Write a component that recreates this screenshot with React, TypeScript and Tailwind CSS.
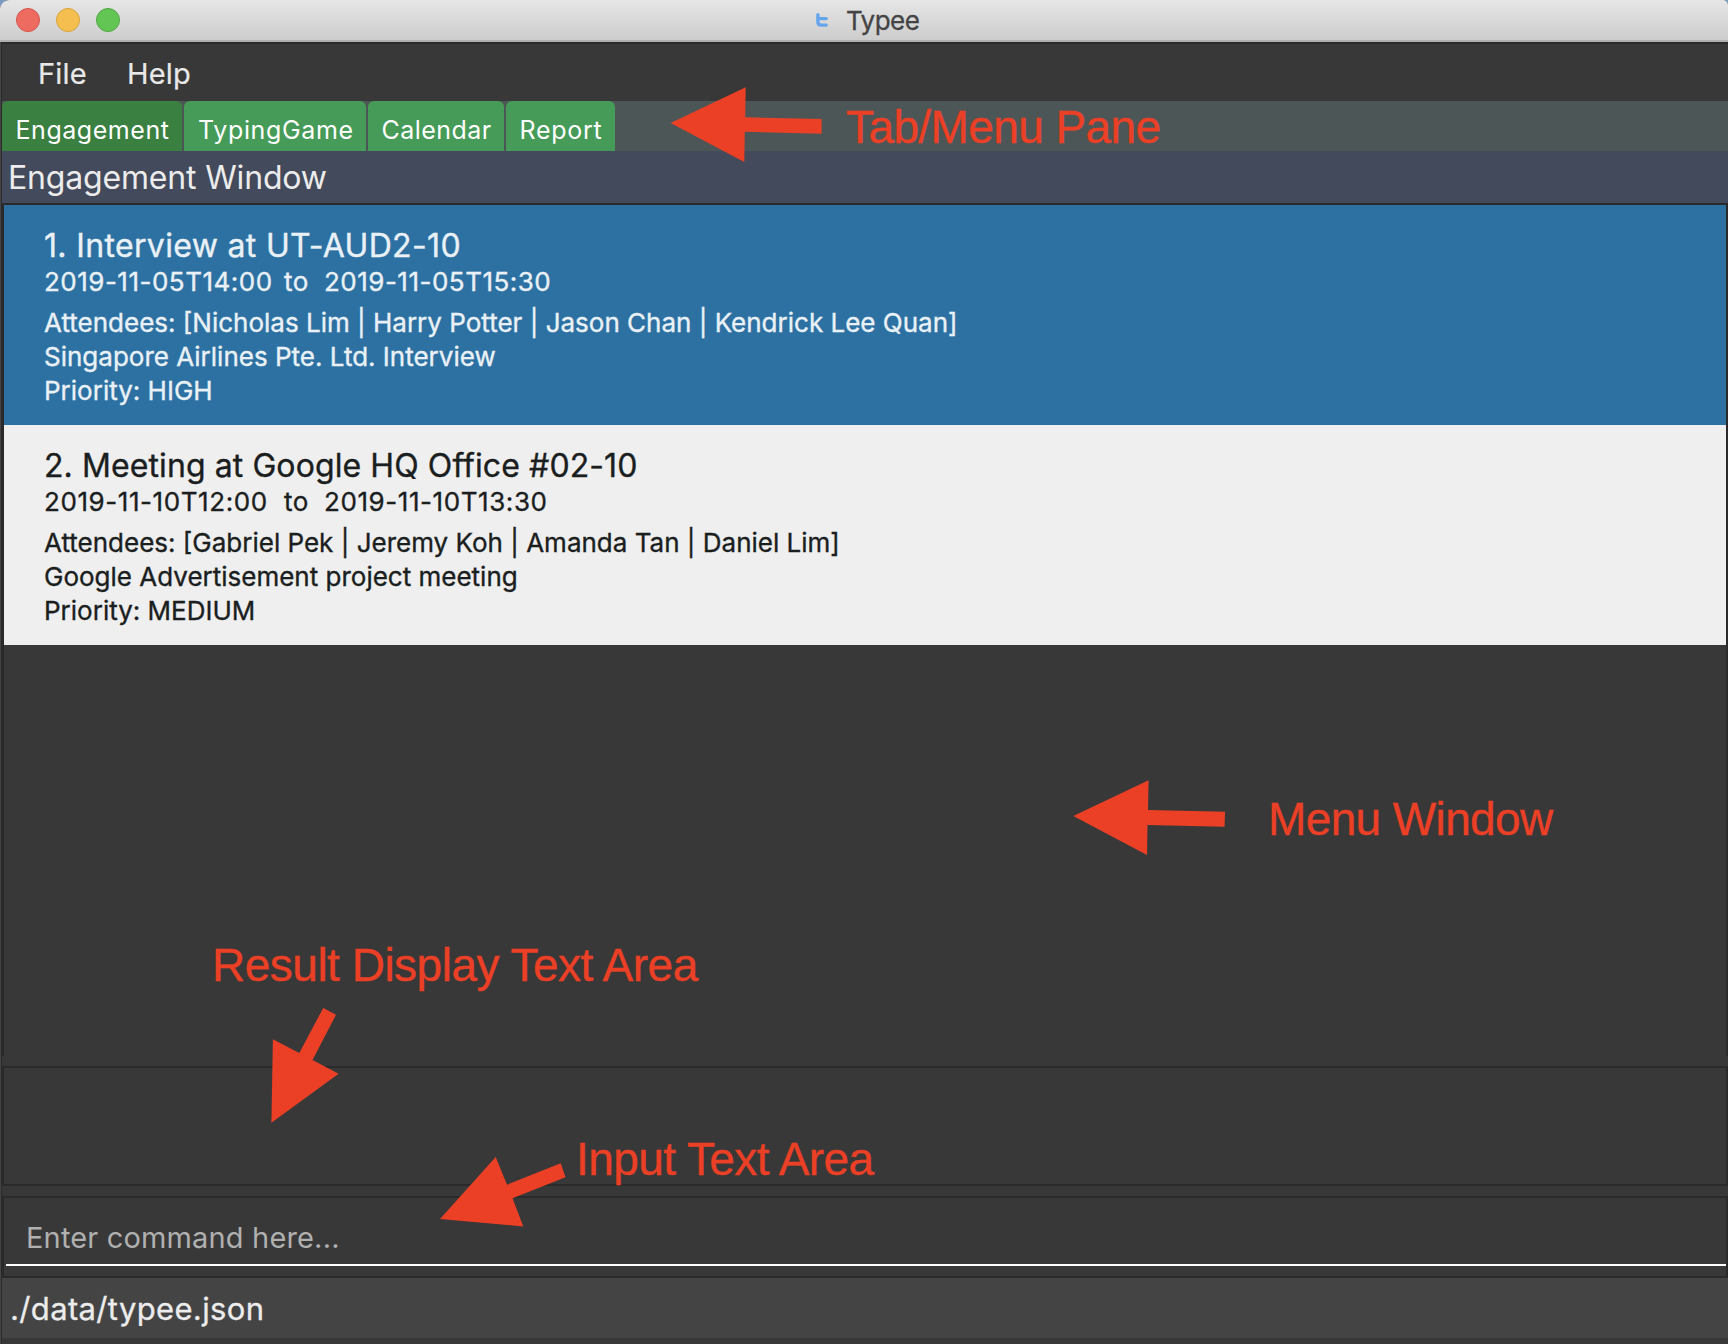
type Engagement = {
  title: string;
  titleSpacing: string;
  from: string;
  to: string;
  dateSpacing: string;
  attendees: string;
  description: string;
  priority: string;
  selected: boolean;
};

const engagements: Engagement[] = [
  {
    title: '1. Interview at UT-AUD2-10',
    titleSpacing: 'tracking-[0.34px]',
    from: '2019-11-05T14:00',
    to: '2019-11-05T15:30',
    dateSpacing: 'tracking-[0.49px]',
    attendees: 'Attendees: [Nicholas Lim | Harry Potter | Jason Chan | Kendrick Lee Quan]',
    description: 'Singapore Airlines Pte. Ltd. Interview',
    priority: 'Priority: HIGH',
    selected: true,
  },
  {
    title: '2. Meeting at Google HQ Office #02-10',
    titleSpacing: 'tracking-[0.09px]',
    from: '2019-11-10T12:00',
    to: '2019-11-10T13:30',
    dateSpacing: 'tracking-[0.57px]',
    attendees: 'Attendees: [Gabriel Pek | Jeremy Koh | Amanda Tan | Daniel Lim]',
    description: 'Google Advertisement project meeting',
    priority: 'Priority: MEDIUM',
    selected: false,
  },
];

const tabs = [
  { label: 'Engagement', style: 'w-[180px] bg-[#3a8040] tracking-[0.55px] pl-[13.5px]' },
  { label: 'TypingGame', style: 'w-[182px] bg-[#459b57] tracking-[0.65px] pl-[14px]' },
  { label: 'Calendar', style: 'w-[136px] bg-[#459b57] tracking-[0.44px] pl-[13.5px]' },
  { label: 'Report', style: 'w-[109px] bg-[#459b57] tracking-[0.7px] pl-[13.5px]' },
];

function TitleBar() {
  return (
    <header className="relative flex h-[42px] shrink-0 items-center border-b-2 border-[#b0b0b0] bg-gradient-to-b from-[#e6e6e6] to-[#cdcdcd] pl-4">
      <div className="flex gap-4">
        <span className="size-6 rounded-full border border-[#d4544c] bg-[#ed6b60]" />
        <span className="size-6 rounded-full border border-[#d9a13c] bg-[#f5bf4f]" />
        <span className="size-6 rounded-full border border-[#50a73f] bg-[#62c554]" />
      </div>
      <svg className="ml-[696px] h-[14px] w-[12px]" viewBox="0 0 12 14" fill="none" stroke="#64a5ee" strokeWidth="3.4" strokeLinecap="round">
        <path d="M1.9 1.7V9Q1.9 12.1 5 12.1H10.2M2 5.6H10.2" />
      </svg>
      <h1 className="ml-[18px] pt-px text-[26px] leading-[39px] tracking-[-0.55px] text-[#444444] [-webkit-text-stroke:0.3px]">Typee</h1>
    </header>
  );
}

function EngagementCard({ item }: { item: Engagement }) {
  return (
    <li
      className={`h-[220px] pt-[22px] pl-[40px] text-[26px] leading-[34px] whitespace-pre [-webkit-text-stroke:0.35px] ${
        item.selected ? 'bg-[#2d71a3] text-[#eaf1f6]' : 'bg-[#efefef] text-[#1b1e1e]'
      }`}
    >
      <h3 className={`text-[32px] leading-[38px] ${item.titleSpacing}`}>{item.title}</h3>
      <div className="mb-[7px] flex">
        <span className={`w-[240px] ${item.dateSpacing}`}>{item.from}</span>
        <span className="w-[40px] tracking-[0.5px]">to</span>
        <span className={item.dateSpacing}>{item.to}</span>
      </div>
      <p>{item.attendees}</p>
      <p>{item.description}</p>
      <p>{item.priority}</p>
    </li>
  );
}

function Annotations() {
  return (
    <div className="pointer-events-none absolute inset-0 font-['Liberation_Sans',Arial,sans-serif] text-[46px] leading-[46px] whitespace-nowrap text-[#ec4026] [-webkit-text-stroke:0.35px]">
      <svg className="absolute inset-0 h-[1344px] w-[1728px]" viewBox="0 0 1728 1344" fill="#ec4026">
        <polygon points="670.6,123 745.7,87.3 745.2,117.3 821.6,119 821.6,133.7 744.8,131.7 744.3,162" />
        <polygon points="1073.3,816 1148.6,780.3 1148,810 1225,811.7 1224.6,826.7 1147.5,825 1147,855" />
        <polygon points="271.4,1122.7 272.9,1039.3 299.3,1053 323.2,1008 336,1014.8 312.5,1060 338.6,1073.8" />
        <polygon points="440,1219 495.7,1157 507,1184.7 560.7,1163.3 565.5,1177.3 512.5,1198.3 523.3,1226.5" />
      </svg>
      <span className="absolute top-[104px] left-[846px] tracking-[-0.6px]">Tab/Menu Pane</span>
      <span className="absolute top-[796px] left-[1268px] tracking-[-0.62px]">Menu Window</span>
      <span className="absolute top-[942px] left-[212px] tracking-[-0.5px]">Result Display Text Area</span>
      <span className="absolute top-[1136px] left-[576px] tracking-[-0.56px]">Input Text Area</span>
    </div>
  );
}

export default function App() {
  return (
    <div className="relative h-[1344px] w-[1728px] overflow-hidden bg-[#7a9cc4] font-['Inter','Liberation_Sans',sans-serif] font-normal">
      <div className="flex h-full flex-col overflow-hidden rounded-tl-[9px] rounded-tr-[5px] bg-[#383838]">
        <TitleBar />
        <div className="flex min-h-0 flex-1 border-l border-[#444444]">
          <div className="flex min-w-0 flex-1 flex-col border-l border-[#2a2a2a]">
            <nav className="flex h-[59px] shrink-0 border-t-2 border-[#2a2a2a] pt-[3px] pl-[36px] text-[29px] leading-[54px] tracking-[0.2px] text-[#e8e8e8] [-webkit-text-stroke:0.2px]">
              <span className="w-[89px]">File</span>
              <span>Help</span>
            </nav>

            <div className="flex h-[50px] shrink-0 gap-[2px] bg-[#4d5656] text-[25px] leading-[42px] text-white">
              {tabs.map((tab) => (
                <button key={tab.label} className={`rounded-t-[6px] pt-2 text-left ${tab.style}`}>
                  {tab.label}
                </button>
              ))}
            </div>

            <h2 className="h-[52px] shrink-0 bg-[#424a5b] pt-px pl-[6px] text-[32px] leading-[51px] tracking-[-0.17px] text-[#ececec]">
              Engagement Window
            </h2>

            <ul className="h-[853px] shrink-0 border-x-2 border-t-2 border-[#2a2a2a]">
              {engagements.map((item) => (
                <EngagementCard key={item.title} item={item} />
              ))}
            </ul>

            <div className="mt-[10px] h-[120px] shrink-0 border-2 border-[#2a2a2a]" />

            <div className="mt-[10px] h-[82px] shrink-0 border-2 border-[#2a2a2a] pl-[2px]">
              <div className="h-[68px] border-b-2 border-white pt-[14px] pl-[20px] text-[29px] leading-[52px] tracking-[0.16px] text-[#b0b0b0]">
                Enter command here...
              </div>
            </div>

            <footer className="h-[60px] shrink-0 bg-[#444444] pt-[2px] pl-[8px] text-[31px] leading-[58px] tracking-[0.35px] text-[#ececec] [-webkit-text-stroke:0.3px]">
              ./data/typee.json
            </footer>
          </div>
        </div>
      </div>
      <Annotations />
    </div>
  );
}
